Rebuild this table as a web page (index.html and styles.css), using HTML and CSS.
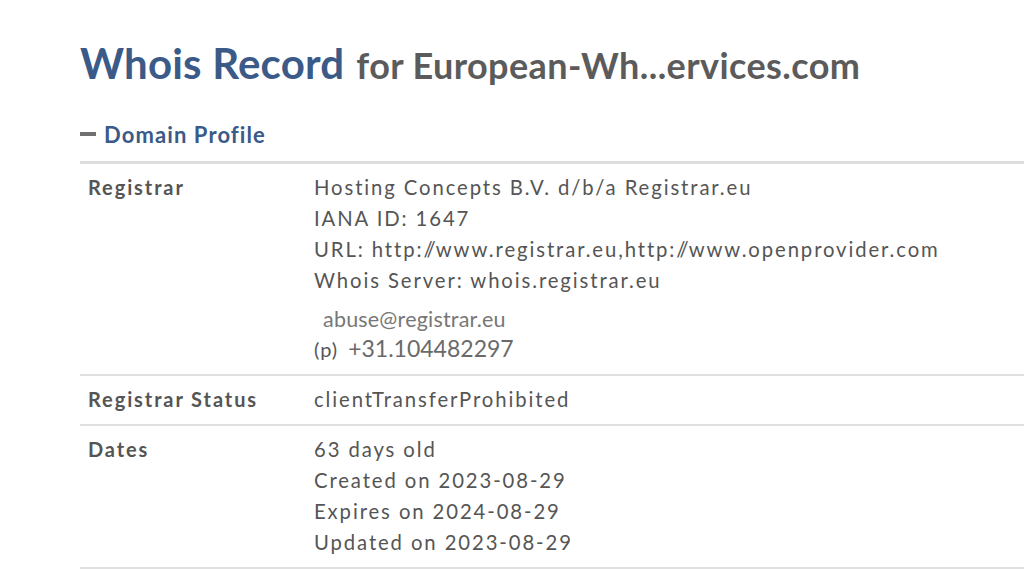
FILE: index.html
```html
<!DOCTYPE html>
<html>
<head>
<meta charset="utf-8">
<link rel="stylesheet" href="styles.css">
</head>
<body>
<div class="page">
  <h1 class="title"><span class="title-main">Whois Record</span><span class="title-sub">for European-Wh...ervices.com</span></h1>
  <div class="section-head"><span class="dash"></span><span class="section-name">Domain Profile</span></div>
  <div class="table">
    <div class="row">
      <div class="label">Registrar</div>
      <div class="value">
        <div class="line">Hosting Concepts B.V. d/b/a Registrar.eu</div>
        <div class="line">IANA ID: 1647</div>
        <div class="line">URL: http:<span class="sl">//</span>www.registrar.eu,http:<span class="sl">//</span>www.openprovider.com</div>
        <div class="line">Whois Server: whois.registrar.eu</div>
        <div class="email">abuse@registrar.eu</div>
        <div class="phone"><span class="p">(p)</span><span class="num">+31.104482297</span></div>
      </div>
    </div>
    <div class="row">
      <div class="label">Registrar Status</div>
      <div class="value"><div class="line">clientTransferProhibited</div></div>
    </div>
    <div class="row">
      <div class="label">Dates</div>
      <div class="value">
        <div class="line">63 days old</div>
        <div class="line">Created on 2023-08-29</div>
        <div class="line">Expires on 2024-08-29</div>
        <div class="line">Updated on 2023-08-29</div>
      </div>
    </div>
  </div>
</div>
</body>
</html>
```
FILE: styles.css
```css
html, body {
  margin: 0;
  padding: 0;
  background: #fff;
}
body {
  font-family: Lato, "Liberation Sans", sans-serif;
  color: #555;
  overflow: hidden;
}
.page {
  padding: 38px 0 0 80px;
}
.title {
  margin: 0;
  font-weight: 700;
  line-height: 50px;
  white-space: nowrap;
}
.title-main {
  font-size: 42px;
  color: #3b5a88;
  letter-spacing: 0.2px;
}
.title-sub {
  font-size: 36px;
  color: #5b5b5b;
  letter-spacing: 0.4px;
  margin-left: 12px;
}
.section-head {
  display: flex;
  align-items: center;
  margin-top: 27px;
  height: 30px;
}
.dash {
  display: block;
  width: 16px;
  height: 4px;
  background: #707070;
  margin-right: 8px;
}
.section-name {
  font-size: 22px;
  font-weight: 700;
  color: #3b5a88;
  letter-spacing: 1.1px;
}
.table {
  margin-top: 12px;
  border-top: 3px solid #ddd;
}
.row {
  display: flex;
  border-bottom: 2px solid #e0e0e0;
  padding: 8px 0 9px;
}
.label {
  width: 234px;
  flex: none;
  padding-left: 8px;
  box-sizing: border-box;
  font-size: 20px;
  font-weight: 700;
  line-height: 31px;
  letter-spacing: 1.9px;
}
.value {
  font-size: 20.3px;
  line-height: 31px;
  letter-spacing: 1.9px;
}
.sl {
  letter-spacing: -1.5px;
  margin-right: 1.5px;
}
.email {
  font-size: 21.5px;
  color: #777;
  line-height: 26px;
  margin: 10px 0 0 9px;
  letter-spacing: 0.2px;
}
.phone {
  display: flex;
  align-items: baseline;
  line-height: 32px;
  letter-spacing: 0;
}
.p {
  font-size: 20px;
  color: #555;
  margin-right: 10px;
  letter-spacing: 1px;
}
.num {
  font-size: 23px;
  color: #6a6a6a;
}
```
